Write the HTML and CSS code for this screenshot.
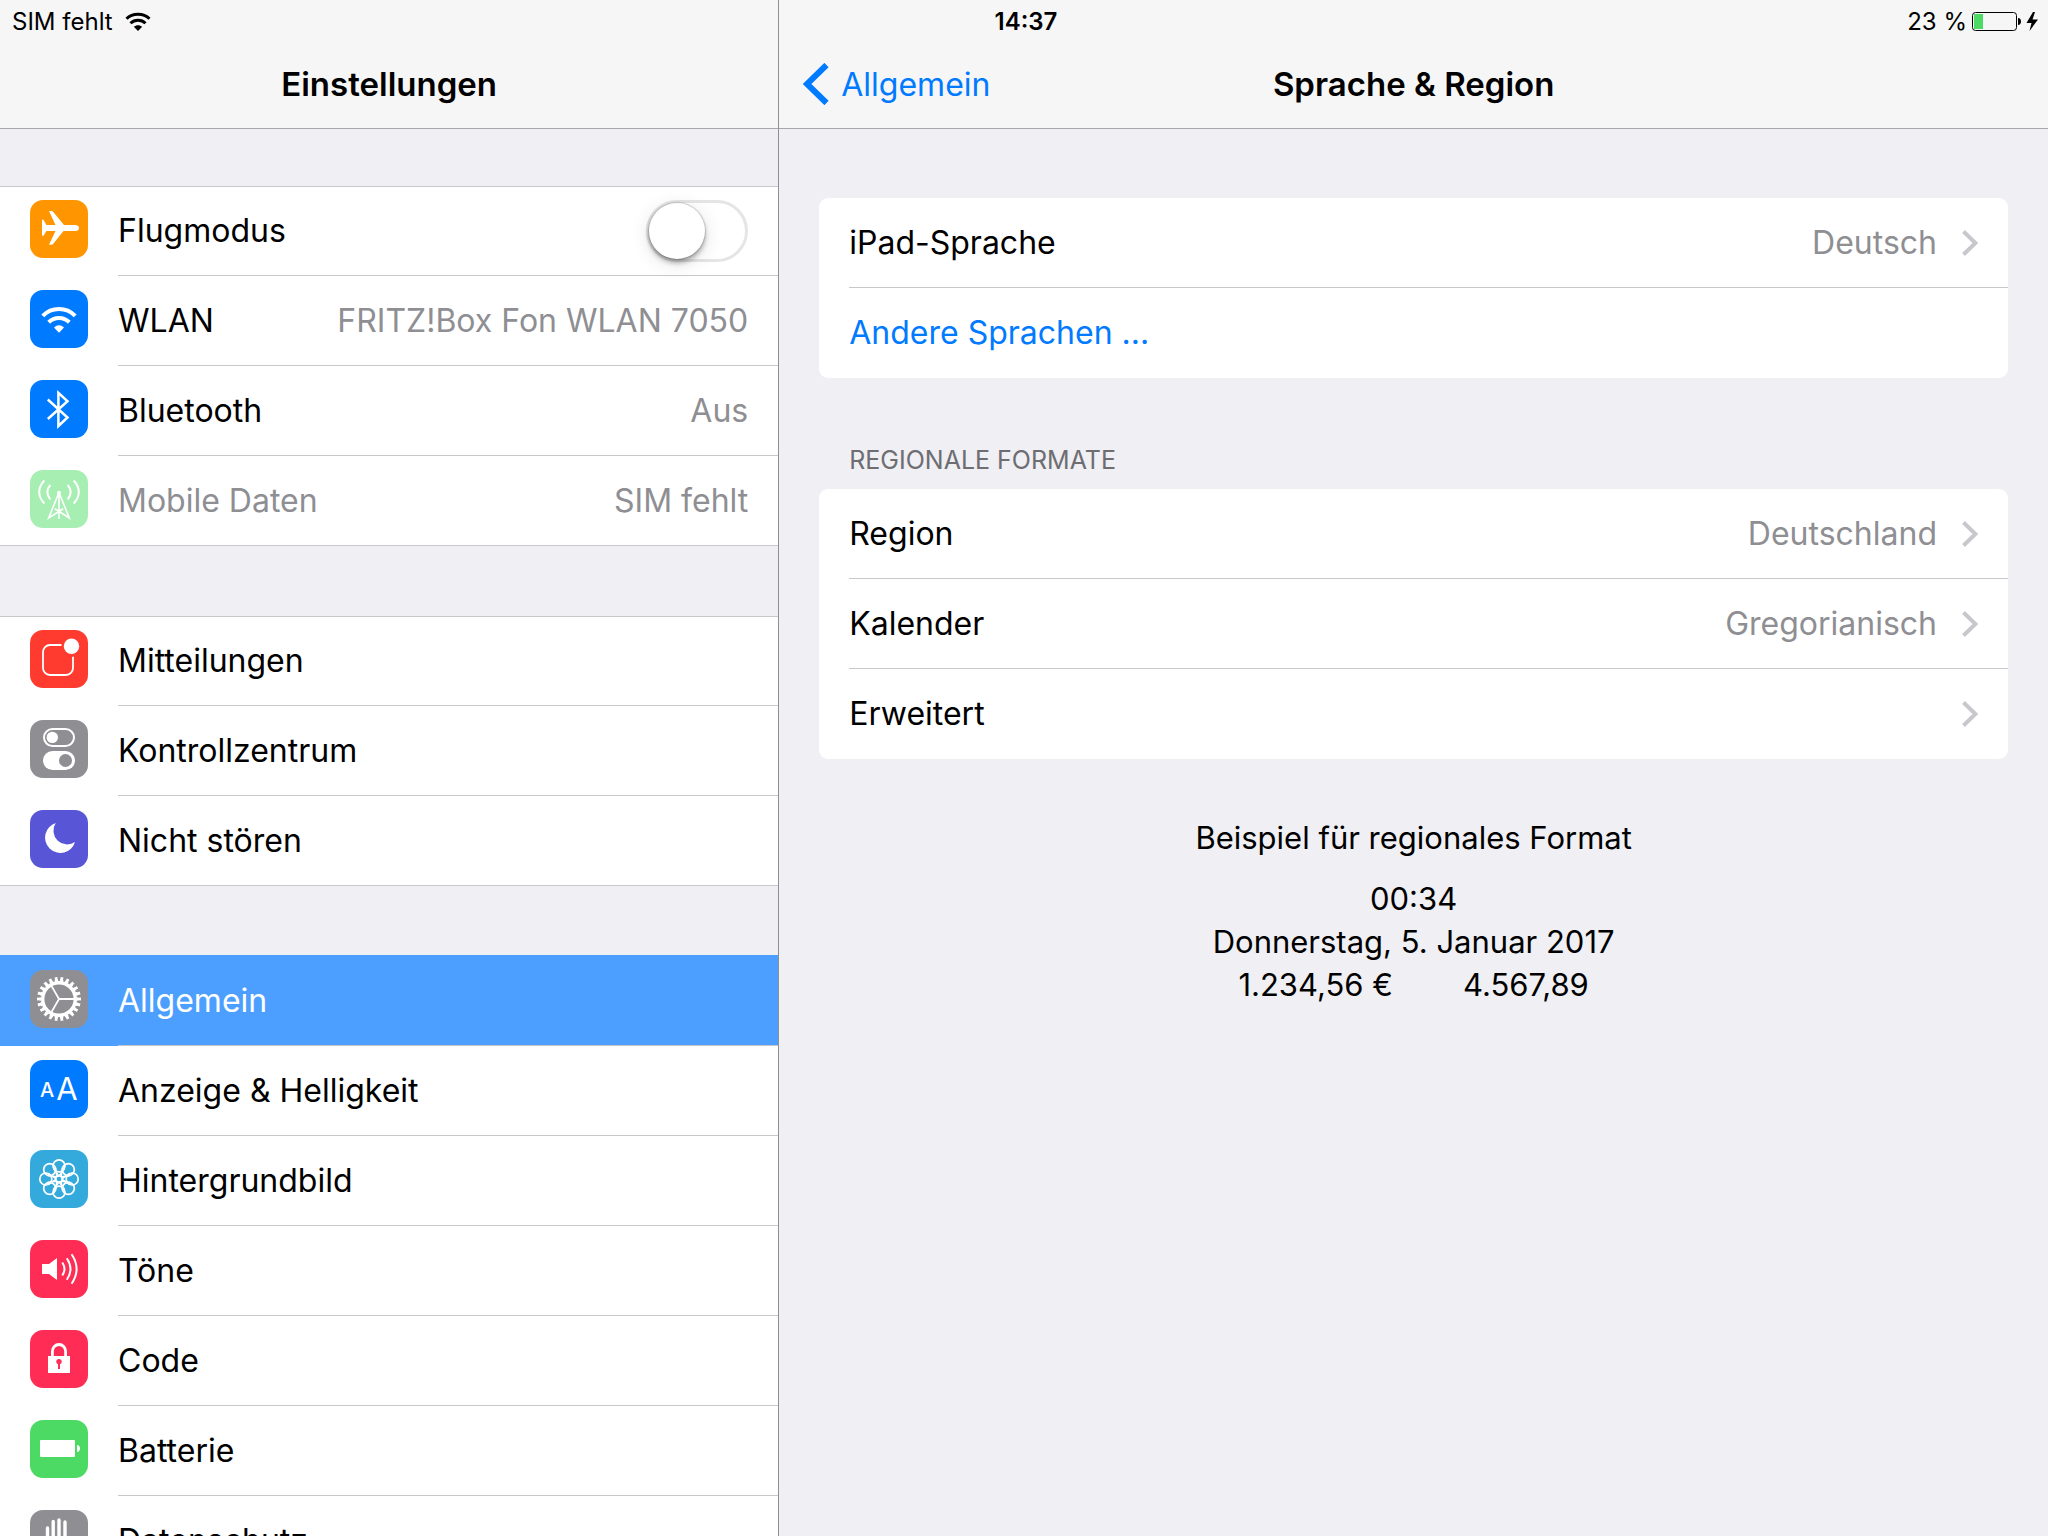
FILE: index.html
```html
<!DOCTYPE html>
<html lang="de">
<head>
    <meta charset="UTF-8">
    <meta name="viewport" content="width=device-width, initial-scale=1.0">
    <title>Einstellungen</title>
    <link rel="stylesheet" href="styles.css">
</head>
<body>
    <header class="statusbar">
        <div class="status-left">
            <span>SIM fehlt</span>
            <svg class="status-wifi" viewBox="0 0 26 20" aria-hidden="true">
                <path d="M1.5 6.800C7.500.8 18.500.8 24.500 6.800" fill="none" stroke="#000" stroke-width="3"/>
                <path d="M5.500 11.200c4-4 11-4 15 0" fill="none" stroke="#000" stroke-width="3"/>
                <path d="M8.800 14.800c2.300-2.200 6.100-2.200 8.400 0L13 19z"/>
            </svg>
        </div>
        <time class="status-time">14:37</time>
        <div class="status-right">
            <span>23 %</span>
            <svg class="status-battery" viewBox="0 0 68 20" aria-hidden="true">
                <rect x=".5" y=".5" width="44" height="18" rx="3" fill="none" stroke="#000"/>
                <rect x="2" y="2" width="9" height="15" fill="#4cd964"/>
                <path d="M46 6c4 0 4 7 0 7z"/>
                <path d="M61 0 54.500 11h5L57.500 19 66 7.500h-5.500L63 0z"/>
            </svg>
        </div>
    </header>

    <div class="split">
        <nav class="sidebar">
            <div class="navbar">
                <h1>Einstellungen</h1>
            </div>
            <div class="sidebar-list">
                <div class="group">
                    <label class="row">
                        <svg class="icon orange" viewBox="0 0 58 58" aria-hidden="true">
                            <path d="M12 19.700h1.500L16.500 25h9L19 11h2.500q1 0 1.600.8L34 25h11.500q3.500.5 3.500 3t-3.500 3h-12L23.100 43.900q-.6.800-1.600.8H19L25.500 31h-9l-3 4.700H12z"/>
                        </svg>
                        <span class="row-body">
                            <span>Flugmodus</span>
                            <input class="switch" type="checkbox" role="switch">
                        </span>
                    </label>
                    <a class="row" href="#wlan">
                        <svg class="icon blue" viewBox="0 0 58 58" aria-hidden="true">
                            <path class="line" stroke-width="4" d="M12.800 25.800a22.500 22.500 0 0 1 32.400 0"/>
                            <path class="line" stroke-width="4" d="M18.700 32.200a14.800 14.800 0 0 1 20.600 0"/>
                            <path d="M24 37.500q5-4.300 10 0l-5 5.300z"/>
                        </svg>
                        <span class="row-body">
                            <span>WLAN</span>
                            <span class="value">FRITZ!Box Fon WLAN 7050</span>
                        </span>
                    </a>
                    <a class="row" href="#bluetooth">
                        <svg class="icon blue" viewBox="0 0 58 58" aria-hidden="true">
                            <path class="line" stroke-width="2.500" d="m17.800 19.500 19.700 18L28.400 46V12.800l9.100 8.500L17.800 39"/>
                        </svg>
                        <span class="row-body">
                            <span>Bluetooth</span>
                            <span class="value">Aus</span>
                        </span>
                    </a>
                    <a class="row disabled" href="#mobile-daten">
                        <svg class="icon green faded" viewBox="0 0 58 58" aria-hidden="true">
                            <path class="line" stroke-width="2" d="M14.300 10.500q-10.200 11.500 0 23M20.300 15q-6 7 0 14.300M43.700 10.500q10.200 11.500 0 23M37.700 15q6 7 0 14.300"/>
                            <circle cx="29" cy="22.800" r="2"/>
                            <path class="line" stroke-width="1.600" d="M29 23v26M28.400 24l-9.700 24 14.500-9.200M29.600 24l9.700 24-14.500-9.200"/>
                        </svg>
                        <span class="row-body">
                            <span>Mobile Daten</span>
                            <span class="value">SIM fehlt</span>
                        </span>
                    </a>
                </div>

                <div class="group">
                    <a class="row" href="#mitteilungen">
                        <svg class="icon red" viewBox="0 0 58 58" aria-hidden="true">
                            <path class="line" stroke-width="1.800" d="M31.500 15H20a7 7 0 0 0-7 7v16a7 7 0 0 0 7 7h16a7 7 0 0 0 7-7V26.700"/>
                            <circle cx="41.500" cy="16.300" r="7.700"/>
                        </svg>
                        <span class="row-body">Mitteilungen</span>
                    </a>
                    <a class="row" href="#kontrollzentrum">
                        <svg class="icon gray" viewBox="0 0 58 58" aria-hidden="true">
                            <rect class="line" stroke-width="2" x="14" y="9" width="30" height="17" rx="8.500"/>
                            <circle cx="22.300" cy="17.400" r="5.700"/>
                            <rect x="13" y="31" width="32" height="19" rx="9.500"/>
                            <circle class="hole" cx="35.500" cy="40.500" r="6.500"/>
                        </svg>
                        <span class="row-body">Kontrollzentrum</span>
                    </a>
                    <a class="row" href="#nicht-stoeren">
                        <svg class="icon purple" viewBox="0 0 58 58" aria-hidden="true">
                            <path d="M25.700 13A15.300 15.300 0 1 0 45 32 13.800 13.800 0 0 1 25.700 13z"/>
                        </svg>
                        <span class="row-body">Nicht stören</span>
                    </a>
                </div>

                <div class="group">
                    <a class="row selected" href="#allgemein">
                        <svg class="icon gray" viewBox="0 0 58 58" aria-hidden="true">
                            <circle class="line" stroke-width="3.400" cx="29" cy="29" r="16.300"/>
                            <circle class="line" stroke-width="2" cx="29" cy="29" r="18.500" pathLength="220" stroke-dasharray="6.400 3.600" stroke-dashoffset="3.200"/>
                            <circle class="line" stroke-width="5" cx="29" cy="29" r="19.500" pathLength="220" stroke-dasharray="4.800 5.200" stroke-dashoffset="2.400"/>
                            <path class="line" stroke-width="1.800" d="M29 29h16M29 29l-8-13.900M29 29l-8 13.900"/>
                        </svg>
                        <span class="row-body">Allgemein</span>
                    </a>
                    <a class="row" href="#anzeige">
                        <svg class="icon blue" viewBox="0 0 58 58" aria-hidden="true">
                            <text x="17" y="37" font-size="20" font-weight="500">A</text>
                            <text x="37" y="40" font-size="31">A</text>
                        </svg>
                        <span class="row-body">Anzeige &amp; Helligkeit</span>
                    </a>
                    <a class="row" href="#hintergrundbild">
                        <svg class="icon cyan" viewBox="0 0 58 58" aria-hidden="true">
                            <defs>
                                <g id="petal">
                                    <circle cx="29" cy="15.800" r="6"/>
                                    <path d="M28.400 25.500 23.600 18.500M29.600 25.500 34.400 18.500"/>
                                </g>
                            </defs>
                            <g class="line" stroke-width="1.700">
                                <circle cx="29" cy="29" r="3.200"/>
                                <use href="#petal"/>
                                <use href="#petal" transform="rotate(45 29 29)"/>
                                <use href="#petal" transform="rotate(90 29 29)"/>
                                <use href="#petal" transform="rotate(135 29 29)"/>
                                <use href="#petal" transform="rotate(180 29 29)"/>
                                <use href="#petal" transform="rotate(225 29 29)"/>
                                <use href="#petal" transform="rotate(270 29 29)"/>
                                <use href="#petal" transform="rotate(315 29 29)"/>
                            </g>
                        </svg>
                        <span class="row-body">Hintergrundbild</span>
                    </a>
                    <a class="row" href="#toene">
                        <svg class="icon pink" viewBox="0 0 58 58" aria-hidden="true">
                            <path d="M12 24h7l8-6v22l-8-6h-7z"/>
                            <path class="line" stroke-width="2" d="M32.300 22.500q4.400 6.500 0 13M36.800 18.200q7.400 10.800 0 21.600M41.600 14.300q10 14.700 0 29.400"/>
                        </svg>
                        <span class="row-body">Töne</span>
                    </a>
                    <a class="row" href="#code">
                        <svg class="icon pink" viewBox="0 0 58 58" aria-hidden="true">
                            <path class="line" stroke-width="2.800" d="M22.400 27v-5.500a6.600 7 0 0 1 13.200 0V27"/>
                            <path d="M18 26h22v17H18z"/>
                            <circle class="hole" cx="29" cy="31.600" r="2.700"/>
                            <path class="hole" d="M28 32h2v7h-2z"/>
                        </svg>
                        <span class="row-body">Code</span>
                    </a>
                    <a class="row" href="#batterie">
                        <svg class="icon green" viewBox="0 0 58 58" aria-hidden="true">
                            <rect x="10" y="20" width="35" height="17" rx="1"/>
                            <path d="M47 25c4 0 4 7 0 7z"/>
                        </svg>
                        <span class="row-body">Batterie</span>
                    </a>
                    <a class="row" href="#datenschutz">
                        <svg class="icon gray" viewBox="0 0 58 58" aria-hidden="true">
                            <path class="line" stroke-width="3.400" stroke-linecap="round" d="M17.500 18v18M23.200 11.500V34M29 10v24M35 12v24"/>
                            <path d="M16 31h21v5l5-5 3 2-9 13q-2 3-6 3h-5q-9-2-9-12z"/>
                        </svg>
                        <span class="row-body">Datenschutz</span>
                    </a>
                </div>
            </div>
        </nav>

        <main class="detail">
            <div class="navbar">
                <a class="back" href="#allgemein">
                    <svg class="back-arrow" viewBox="0 0 26 42" aria-hidden="true">
                        <path d="M23.500 2 4 21l19.500 19" fill="none" stroke="#007aff" stroke-width="6"/>
                    </svg>
                    Allgemein
                </a>
                <h2>Sprache &amp; Region</h2>
            </div>
            <div class="detail-content">
                <div class="card">
                    <a class="card-row" href="#ipad-sprache">
                        <span>iPad-Sprache</span>
                        <span class="value">Deutsch</span>
                        <svg class="chevron" viewBox="0 0 16 26" aria-hidden="true"><path d="m1.500 1.500 12 11.500-12 11.500"/></svg>
                    </a>
                    <a class="card-row action" href="#andere-sprachen">Andere Sprachen ...</a>
                </div>

                <h3>REGIONALE FORMATE</h3>
                <div class="card">
                    <a class="card-row" href="#region">
                        <span>Region</span>
                        <span class="value">Deutschland</span>
                        <svg class="chevron" viewBox="0 0 16 26" aria-hidden="true"><path d="m1.500 1.500 12 11.500-12 11.500"/></svg>
                    </a>
                    <a class="card-row" href="#kalender">
                        <span>Kalender</span>
                        <span class="value">Gregorianisch</span>
                        <svg class="chevron" viewBox="0 0 16 26" aria-hidden="true"><path d="m1.500 1.500 12 11.500-12 11.500"/></svg>
                    </a>
                    <a class="card-row" href="#erweitert">
                        <span>Erweitert</span>
                        <span class="value"></span>
                        <svg class="chevron" viewBox="0 0 16 26" aria-hidden="true"><path d="m1.500 1.500 12 11.500-12 11.500"/></svg>
                    </a>
                </div>

                <div class="example">
                    <p class="example-title">Beispiel für regionales Format</p>
                    <p>00:34</p>
                    <p>Donnerstag, 5. Januar 2017</p>
                    <p class="numbers"><span>1.234,56 €</span><span>4.567,89</span></p>
                </div>
            </div>
        </main>
    </div>
</body>
</html>
```
FILE: styles.css
```css
* {
    margin: 0;
    padding: 0;
    box-sizing: border-box;
}

body {
    font-family: Inter, "Liberation Sans", sans-serif;
    font-size: 32px;
    line-height: 43px;
    color: #000;
    background-color: #efeff4;
}

a {
    color: inherit;
    text-decoration: none;
}

/* Status bar, lies over both columns */
.statusbar {
    position: absolute;
    top: 0;
    left: 0;
    right: 0;
    z-index: 1;
    display: grid;
    grid-template-columns: 1fr auto 1fr;
    align-items: center;
    height: 40px;
    padding: 0 8px 0 12px;
    font-size: 24px;
}

.status-left,
.status-right {
    display: flex;
    align-items: center;
}

.status-left {
    gap: 12px;
}

.status-right {
    justify-content: flex-end;
    gap: 5px;
}

.status-time {
    font-weight: 600;
}

.status-wifi {
    width: 26px;
    height: 20px;
}

.status-battery {
    width: 68px;
    height: 20px;
}

/* Columns */
.split {
    display: grid;
    grid-template-columns: 38% 1fr;
    height: 100vh;
}

.sidebar,
.detail {
    display: flex;
    flex-direction: column;
    min-width: 0;
    min-height: 0;
}

.detail {
    border-left: 1px solid #8e8e93;
}

.navbar {
    display: grid;
    grid-template-columns: 1fr auto 1fr;
    align-items: center;
    flex: none;
    height: 129px;
    padding: 40px 24px 0;
    background-color: #f6f6f6;
    border-bottom: 1px solid #a7a7ab;
}

.navbar h1,
.navbar h2 {
    grid-column: 2;
    font-size: 33px;
    font-weight: 600;
}

.back {
    display: flex;
    align-items: center;
    gap: 12px;
    color: #007aff;
}

.back-arrow {
    width: 26px;
    height: 42px;
}

.sidebar-list,
.detail-content {
    flex: 1;
    min-height: 0;
    overflow-y: auto;
    scrollbar-width: none;
}

/* Sidebar */
.sidebar-list {
    padding-top: 57px;
}

.group {
    margin-bottom: 70px;
    background-color: #fff;
    box-shadow: inset 0 1px #c8c7cc, inset 0 -1px #c8c7cc;
}

.row {
    display: flex;
    gap: 30px;
    height: 90px;
    padding-left: 30px;
}

.row-body {
    flex: 1;
    display: flex;
    align-items: center;
    justify-content: space-between;
    padding-right: 30px;
    border-bottom: 1px solid #c8c7cc;
}

.value {
    color: #8e8e93;
}

.disabled {
    color: #8e8e93;
}

.selected {
    color: #fff;
    background-color: #4c9fff;
    box-shadow: 0 -1px #4c9fff;
}

/* Icons */
.icon {
    flex: none;
    width: 58px;
    height: 58px;
    margin-top: 14px;
    border-radius: 13px;
    background-color: var(--tile);
    fill: #fff;
    text-anchor: middle;
}

.icon .line {
    fill: none;
    stroke: #fff;
}

.icon .hole {
    fill: var(--tile);
}

.orange { --tile: #ff9500; }
.blue { --tile: #007aff; }
.green { --tile: #4cd964; }
.red { --tile: #ff3b30; }
.gray { --tile: #8e8e93; }
.purple { --tile: #5856d6; }
.cyan { --tile: #34aadc; }
.pink { --tile: #ff2d55; }
.faded { --tile: #a6eeb2; }

/* Switch */
.switch {
    appearance: none;
    width: 102px;
    height: 62px;
    border: 3px solid #e5e5e5;
    border-radius: 31px;
    background-color: #fff;
}

.switch::before {
    content: "";
    display: block;
    width: 56px;
    height: 56px;
    border-radius: 50%;
    background-color: #fff;
    box-shadow: 0 0 1px 1px rgba(0, 0, 0, 0.15), 0 4px 5px rgba(0, 0, 0, 0.3), 0 4px 20px rgba(0, 0, 0, 0.12);
}

.switch:checked {
    padding-left: 40px;
    border-color: #4cd964;
    background-color: #4cd964;
}

/* Detail */
.detail-content {
    padding: 69px 40px 40px;
}

.card {
    background-color: #fff;
    border-radius: 9px;
}

.card-row {
    display: flex;
    align-items: center;
    gap: 25px;
    height: 90px;
    margin-left: 30px;
    padding-right: 30px;
    border-bottom: 1px solid #c8c7cc;
}

.card-row:last-child {
    border-bottom-color: transparent;
}

.card-row .value {
    margin-left: auto;
}

.action {
    color: #007aff;
}

.chevron {
    width: 16px;
    height: 26px;
    fill: none;
    stroke: #c7c7cc;
    stroke-width: 4;
}

h3 {
    margin: 66px 30px 13px;
    font-size: 25px;
    line-height: 32px;
    font-weight: 400;
    color: #6d6d72;
}

.example {
    margin-top: 57px;
    font-size: 31px;
    text-align: center;
}

.example-title {
    margin-bottom: 18px;
}

.numbers {
    display: flex;
    justify-content: center;
    gap: 70px;
}
```
